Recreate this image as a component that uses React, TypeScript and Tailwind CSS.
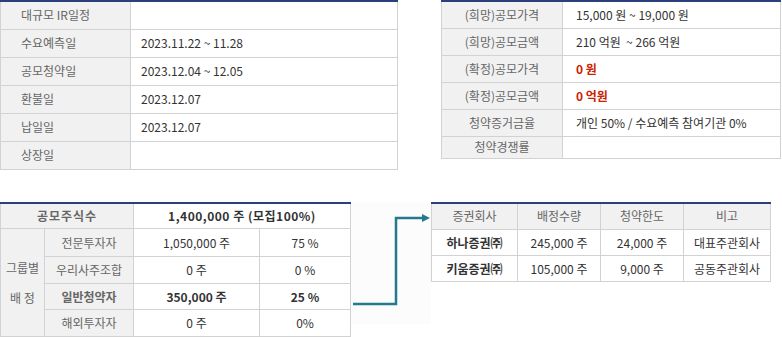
import React from "react";

const F = { fontFamily: '"Noto Sans CJK KR", "Noto Sans", sans-serif' };

const lbl = "bg-[#f1f1f1] text-[#666666] border border-[#d2d2d2]";
const val = "bg-white text-[#333333] border border-[#d2d2d2]";

function TopLeft() {
  const rows: [string, string][] = [
    ["대규모 IR일정", ""],
    ["수요예측일", "2023.11.22 ~ 11.28"],
    ["공모청약일", "2023.12.04 ~ 12.05"],
    ["환불일", "2023.12.07"],
    ["납일일", "2023.12.07"],
    ["상장일", ""],
  ];
  return (
    <table className="w-[398px] border-collapse border-t-2 border-t-[#2a3f7c] table-fixed">
      <colgroup>
        <col className="w-[130px]" />
        <col />
      </colgroup>
      <tbody>
        {rows.map(([a, b], i) => (
          <tr key={i} className="h-[28px]">
            <td className={`${lbl} pl-[20px] ${i === 0 ? "border-t-0" : ""}`}>{a}</td>
            <td className={`${val} pl-[10px] ${i === 0 ? "border-t-0" : ""}`}>{b}</td>
          </tr>
        ))}
      </tbody>
    </table>
  );
}

function TopRight() {
  const rows: [string, React.ReactNode][] = [
    ["(희망)공모가격", "15,000 원 ~ 19,000 원"],
    ["(희망)공모금액", <span>210 억원 &nbsp;~ 266 억원</span>],
    ["(확정)공모가격", <b className="text-[#cc2200]">0 원</b>],
    ["(확정)공모금액", <b className="text-[#cc2200]">0 억원</b>],
    ["청약증거금율", "개인 50% / 수요예측 참여기관 0%"],
    ["청약경쟁률", ""],
  ];
  return (
    <table className="w-[340px] border-collapse border-t-2 border-t-[#2a3f7c] table-fixed">
      <colgroup>
        <col className="w-[121px]" />
        <col />
      </colgroup>
      <tbody>
        {rows.map(([a, b], i) => (
          <tr key={i} className={i === 5 ? "h-[22px]" : "h-[27px]"}>
            <td className={`${lbl} text-center ${i === 0 ? "border-t-0" : ""}`}>{a}</td>
            <td className={`${val} pl-[13px] ${i === 0 ? "border-t-0" : ""}`}>{b}</td>
          </tr>
        ))}
      </tbody>
    </table>
  );
}

function BottomLeft() {
  const dark = "text-[#3a2a52] font-bold";
  return (
    <table className="w-[351px] border-collapse border-t-2 border-t-[#2a3f7c] table-fixed text-center">
      <colgroup>
        <col className="w-[44px]" />
        <col className="w-[89px]" />
        <col className="w-[126px]" />
        <col />
      </colgroup>
      <tbody>
        <tr className="h-[26px]">
          <td colSpan={2} className={`${lbl} border-t-0 ${dark} tracking-[1px]`}>공모주식수</td>
          <td colSpan={2} className={`${val} border-t-0 ${dark} tracking-[0.5px]`}>1,400,000 주 (모집100%)</td>
        </tr>
        <tr className="h-[28px]">
          <td rowSpan={4} className={`${lbl} leading-[30px]`}>
            그룹별
            <br />배 정
          </td>
          <td className={lbl}>전문투자자</td>
          <td className={val}>1,050,000 주</td>
          <td className={val}>75 %</td>
        </tr>
        <tr className="h-[27px]">
          <td className={lbl}>우리사주조합</td>
          <td className={val}>0 주</td>
          <td className={val}>0 %</td>
        </tr>
        <tr className="h-[26px]">
          <td className={`${lbl} ${dark}`}>일반청약자</td>
          <td className={`${val} ${dark}`}>350,000 주</td>
          <td className={`${val} ${dark}`}>25 %</td>
        </tr>
        <tr className="h-[27px]">
          <td className={lbl}>해외투자자</td>
          <td className={val}>0 주</td>
          <td className={val}>0%</td>
        </tr>
      </tbody>
    </table>
  );
}

function BottomRight() {
  const dark = "text-[#2e2438] font-bold";
  const rows: [string, string, string, string][] = [
    ["하나증권㈜", "245,000 주", "24,000 주", "대표주관회사"],
    ["키움증권㈜", "105,000 주", "9,000 주", "공동주관회사"],
  ];
  return (
    <table className="w-[340px] border-collapse border-t-2 border-t-[#2a3f7c] table-fixed text-center">
      <colgroup>
        <col className="w-[86px]" />
        <col className="w-[83px]" />
        <col className="w-[83px]" />
        <col />
      </colgroup>
      <tbody>
        <tr className="h-[27px]">
          {["증권회사", "배정수량", "청약한도", "비고"].map((h) => (
            <td key={h} className={`${lbl} border-t-0`}>{h}</td>
          ))}
        </tr>
        {rows.map((r, i) => (
          <tr key={i} className="h-[26px]">
            <td className={`${val} ${dark}`}>{r[0]}</td>
            <td className={val}>{r[1]}</td>
            <td className={val}>{r[2]}</td>
            <td className={val}>{r[3]}</td>
          </tr>
        ))}
      </tbody>
    </table>
  );
}

function Arrow() {
  return (
    <svg width="80" height="135" viewBox="0 0 80 135" className="shrink-0">
      <rect x="0" y="0" width="80" height="122" fill="#fcfcfc" />
      <polyline
        points="2,102 45,102 45,16 72,16"
        fill="none"
        stroke="#24798f"
        strokeWidth="2.5"
      />
      <polygon points="71,12 79,16 71,20" fill="#24798f" />
    </svg>
  );
}

export default function App() {
  return (
    <div className="w-[782px] h-[337px] bg-white text-[12px] leading-none overflow-hidden" style={F}>
      <div className="flex items-start">
        <TopLeft />
        <div className="w-[43px] shrink-0" />
        <TopRight />
      </div>
      <div className="flex items-start mt-[32px]">
        <BottomLeft />
        <Arrow />
        <BottomRight />
      </div>
    </div>
  );
}
